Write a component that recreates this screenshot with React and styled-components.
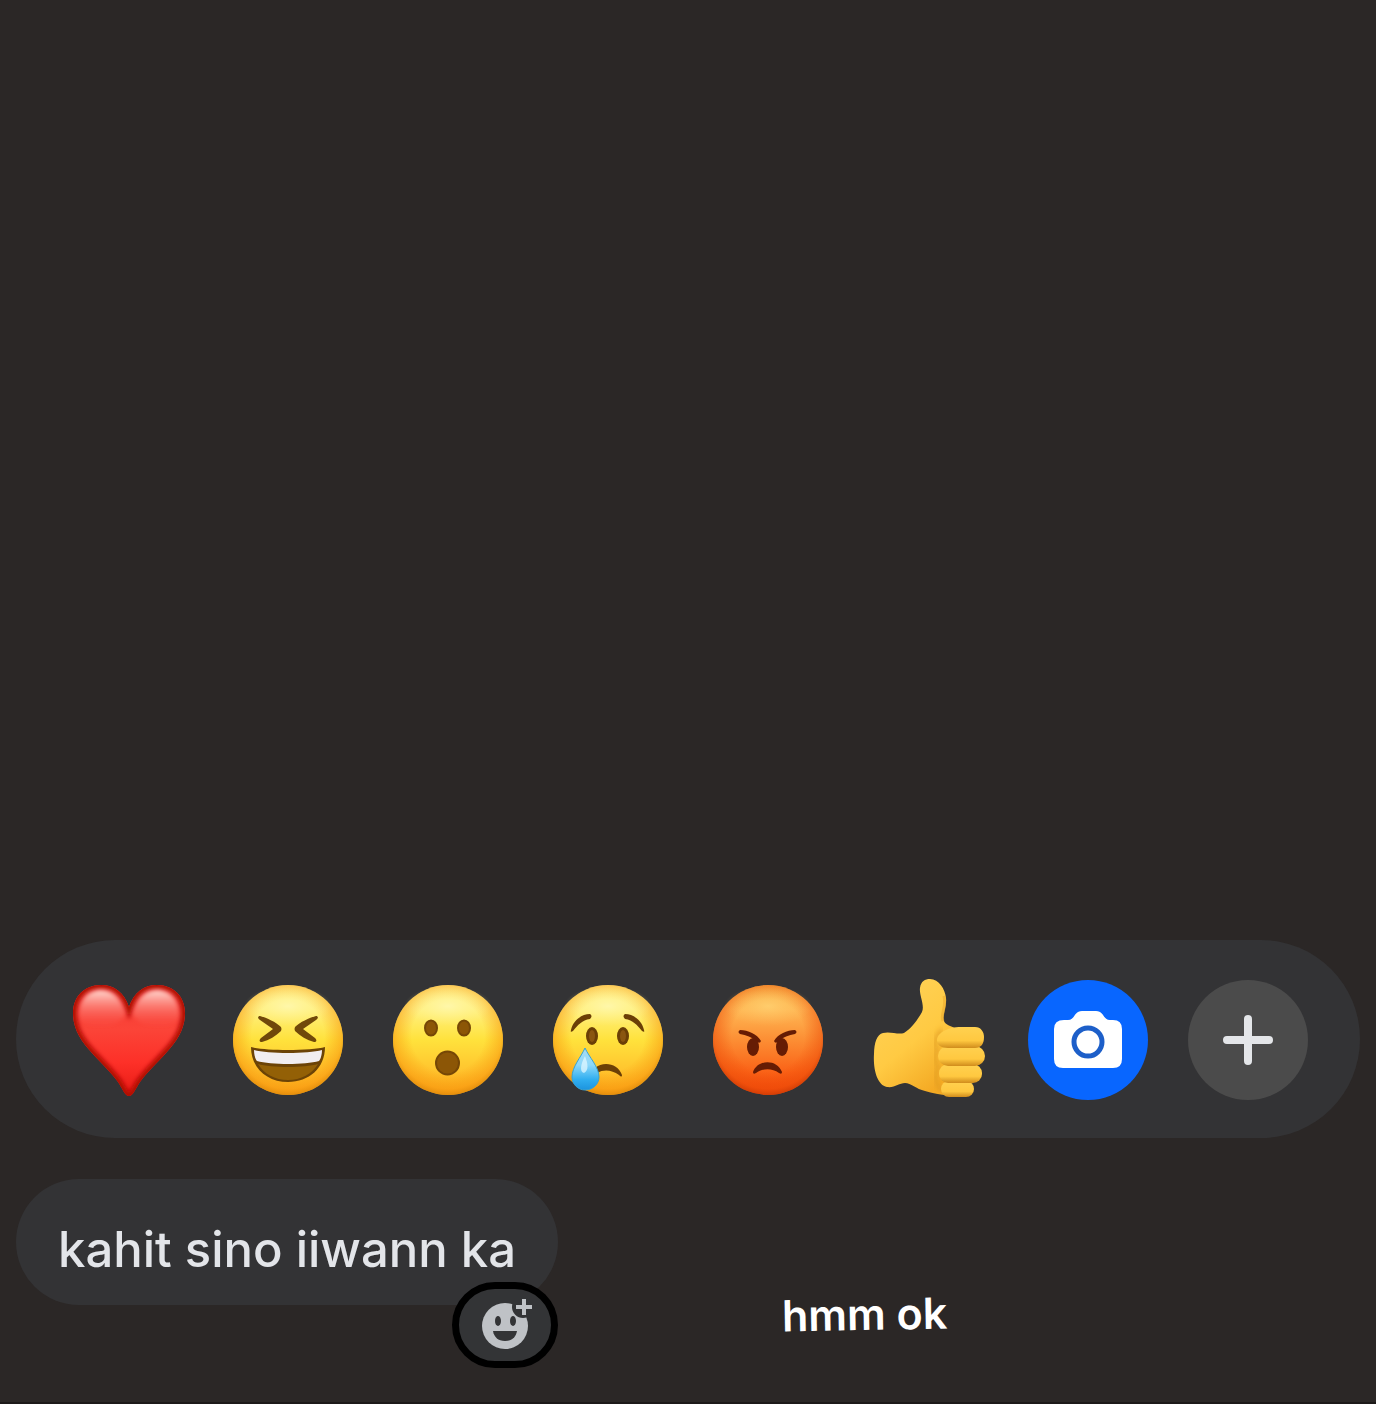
import React, { useState } from 'react';
import styled, { createGlobalStyle } from 'styled-components';

const brown = '#6b3f06';

function FaceBase({ id, angry }) {
  return (
    <>
      <defs>
        <linearGradient id={`${id}-fill`} x1='0' y1='0' x2='0' y2='1'>
          <stop offset='0' stopColor={angry ? '#f6b448' : '#fff08c'} />
          <stop offset='0.22' stopColor={angry ? '#ffb854' : '#fff080'} />
          <stop offset='0.5' stopColor={angry ? '#fc8e34' : '#ffe23c'} />
          <stop offset='0.78' stopColor={angry ? '#fa6418' : '#ffc42e'} />
          <stop offset='1' stopColor={angry ? '#f04408' : '#fba81a'} />
        </linearGradient>
        <radialGradient id={`${id}-edge`} cx='0.5' cy='0.46' r='0.55'>
          <stop offset='0.6' stopColor={angry ? '#f04804' : '#fa9408'} stopOpacity='0' />
          <stop offset='0.88' stopColor={angry ? '#ec4c08' : '#f8940c'} stopOpacity='0.5' />
          <stop offset='1' stopColor={angry ? '#c43804' : '#d88408'} stopOpacity='0.85' />
        </radialGradient>
        <radialGradient id={`${id}-shine`}>
          <stop offset='0' stopColor={angry ? '#ffd070' : '#fff8b0'} stopOpacity='0.85' />
          <stop offset='1' stopColor={angry ? '#ffc060' : '#fff490'} stopOpacity='0' />
        </radialGradient>
      </defs>
      <circle cx='60' cy='60' r='55' fill={`url(#${id}-fill)`} />
      <circle cx='60' cy='60' r='55' fill={`url(#${id}-edge)`} />
      <ellipse cx='60' cy='26' rx='44' ry='20' fill={`url(#${id}-shine)`} />
    </>
  );
}

function Heart() {
  const shape =
    'M61 27C56 12 46 5 33 5C16 5 5 17 5 33C5 49 13 61 24 73C33 83 42 91 50 102C54 108 57 116 61 116C65 116 68 108 72 102C80 91 89 83 98 73C109 61 117 49 117 33C117 17 106 5 89 5C76 5 66 12 61 27Z';
  return (
    <Icon viewBox='0 0 120 120' aria-hidden='true'>
      <defs>
        <linearGradient id='heart-fill' x1='0' y1='0' x2='0' y2='1'>
          <stop offset='0' stopColor='#f23a34' />
          <stop offset='0.4' stopColor='#fb4438' />
          <stop offset='0.7' stopColor='#fd3028' />
          <stop offset='1' stopColor='#e81a14' />
        </linearGradient>
        <linearGradient id='heart-shine' x1='0' y1='0' x2='0' y2='1'>
          <stop offset='0' stopColor='#ffdcd4' />
          <stop offset='1' stopColor='#ff6458' stopOpacity='0' />
        </linearGradient>
        <clipPath id='heart-clip'><path d={shape} /></clipPath>
        <filter id='heart-soft'><feGaussianBlur stdDeviation='2' /></filter>
      </defs>
      <path d={shape} fill='url(#heart-fill)' />
      <g clipPath='url(#heart-clip)'>
        <path d={shape} fill='none' stroke='#b00806' strokeWidth='8' filter='url(#heart-soft)' />
        <g filter='url(#heart-soft)'>
          <path d='M11 38C10 20 20 10 33 10C46 10 53 19 58 34C47 50 21 52 11 38Z' fill='url(#heart-shine)' />
          <path d='M111 38C112 20 102 10 89 10C76 10 69 19 64 34C75 50 101 52 111 38Z' fill='url(#heart-shine)' />
        </g>
      </g>
    </Icon>
  );
}

function Laugh() {
  return (
    <Icon viewBox='0 0 120 120' aria-hidden='true'>
      <FaceBase id='laugh' />
      <g fill='#70480a'>
        <path d='M32 36C39 38 48 42 53 47Q54 49 53 51C48 56 41 60 34 62C31 62 31 60 33 58L45 49L32 40C29 38 30 36 32 36Z' />
        <path d='M88 36C81 38 72 42 67 47Q66 49 67 51C72 56 79 60 86 62C89 62 89 60 87 58L75 49L88 40C91 38 90 36 88 36Z' />
      </g>
      <path d='M23 67C35 71 84 71 97 67C97 88 81 102 60 102C39 102 23 88 23 67Z' fill='#6c4306' />
      <path d='M30 84C43 88 77 88 90 84C84 94 73 100 60 100C47 100 36 94 30 84Z' fill='#936006' />
      <path d='M26 70C40 74 80 74 94 70C94 76 92 80 91 81C77 85 43 85 29 81C28 80 26 76 26 70Z' fill='#f1edf0' />
    </Icon>
  );
}

function Wow() {
  return (
    <Icon viewBox='0 0 120 120' aria-hidden='true'>
      <FaceBase id='wow' />
      <g fill='#8c5606' stroke='#764706' strokeWidth='2'>
        <ellipse cx='43' cy='48' rx='6' ry='7.5' />
        <ellipse cx='76' cy='48' rx='6' ry='7.5' />
        <circle cx='59.5' cy='83' r='11.5' />
      </g>
    </Icon>
  );
}

function Sad() {
  return (
    <Icon viewBox='0 0 120 120' aria-hidden='true'>
      <FaceBase id='sad' />
      <defs>
        <linearGradient id='tear' x1='0' y1='0' x2='0' y2='1'>
          <stop offset='0' stopColor='#a8dcf4' />
          <stop offset='0.4' stopColor='#8cd8fa' />
          <stop offset='0.75' stopColor='#30aef0' />
          <stop offset='1' stopColor='#1c94de' />
        </linearGradient>
      </defs>
      <g fill={brown}>
        <path d='M23 50C25 41 33 34 42 34Q45 36 42 39C34 40 30 45 25 51Q22 53 23 50Z' />
        <path d='M96 50C94 41 86 34 77 34Q74 36 77 39C85 40 89 45 94 51Q97 53 96 50Z' />
        <ellipse cx='44' cy='56' rx='6' ry='9' />
        <ellipse cx='75' cy='56' rx='6' ry='9' />
        <path d='M47 88C55 81 70 83 74 95Q74 98 71 95C64 90 56 89 49 93Z' />
      </g>
      <g fill='#8a5610'>
        <ellipse cx='44' cy='56' rx='3' ry='6' />
        <ellipse cx='75' cy='56' rx='3' ry='6' />
      </g>
      <path d='M37 68C41 77 51 87 51 97C51 104 45 110 37 110C30 110 24 104 24 97C24 87 33 77 37 68Z' fill='url(#tear)' stroke='#35a2d4' strokeWidth='1' />
      <path d='M37 76C40 84 41 90 36 93C31 92 33 83 37 76Z' fill='#e0f7ff' opacity='0.75' />
    </Icon>
  );
}

function Angry() {
  return (
    <Icon viewBox='0 0 120 120' aria-hidden='true'>
      <FaceBase id='angry' angry />
      <g fill='#661c04'>
        <path d='M32 50C40 50 49 54 53 61Q52 64 49 62C44 57 38 55 32 54Q29 52 32 50Z' />
        <path d='M87 50C79 50 70 54 66 61Q67 64 70 62C75 57 81 55 87 54Q90 52 87 50Z' />
        <ellipse cx='45' cy='67' rx='6' ry='9' />
        <ellipse cx='74' cy='67' rx='6' ry='9' />
        <path d='M45 92C50 79 69 79 74 92Q74 95 71 93C64 88 55 88 48 93Q45 95 45 92Z' />
      </g>
    </Icon>
  );
}

function Thumb() {
  return (
    <Icon viewBox='0 0 120 120' aria-hidden='true'>
      <defs>
        <linearGradient id='thumb-fill' x1='0' y1='0' x2='0.6' y2='1'>
          <stop offset='0' stopColor='#ffd45c' />
          <stop offset='0.6' stopColor='#ffca43' />
          <stop offset='1' stopColor='#f4aa24' />
        </linearGradient>
        <linearGradient id='finger' x1='0' y1='0' x2='0' y2='1'>
          <stop offset='0' stopColor='#ffd150' />
          <stop offset='0.65' stopColor='#ffc840' />
          <stop offset='1' stopColor='#d08c1c' />
        </linearGradient>
        <filter id='thumb-soft'><feGaussianBlur stdDeviation='2' /></filter>
      </defs>
      <path
        d='M15 53C22 51 30 55 36 53C44 48 50 39 54 32C57 25 51 15 52 8C53 1 57 -1 62 -1C71 -1 77 9 78 18C79 27 74 35 76 41C77 45 84 46 88 49L92 112C84 118 68 114 57 111C48 109 43 103 37 103C31 103 27 108 19 107C9 105 5 89 6 74C6 63 9 54 15 53Z'
        fill='url(#thumb-fill)'
      />
      <path d='M74 50C66 58 66 66 69 70C65 78 68 84 70 87C65 98 70 108 74 112' fill='none' stroke='#dc9822' strokeWidth='4' opacity='0.6' filter='url(#thumb-soft)' />
      <path d='M76 16C79 28 72 34 75 41' fill='none' stroke='#e9a529' strokeWidth='3' opacity='0.5' />
      <g fill='url(#finger)'>
        <rect x='73' y='101' width='33' height='16' rx='8' />
        <rect x='71' y='84' width='43' height='19' rx='9' />
        <rect x='70' y='66' width='47' height='20' rx='10' />
        <path d='M78 50C84 46 96 47 107 47C113 47 116 52 116 57C116 64 113 68 107 68H80C73 68 69 65 69 60C69 56 73 52 78 50Z' />
      </g>
    </Icon>
  );
}

function Camera() {
  return (
    <Icon viewBox='0 0 120 120' aria-hidden='true'>
      <path
        d='M36 40H40C47 40 46 31 54 31H68C76 31 75 40 82 40H85Q94 40 94 49V79Q94 88 85 88H35Q26 88 26 79V49Q26 40 36 40Z'
        fill='#fff'
      />
      <circle cx='60' cy='62' r='14' fill='#fff' stroke='#1d5fc9' strokeWidth='5' />
    </Icon>
  );
}

function Plus() {
  return (
    <Icon viewBox='0 0 120 120' aria-hidden='true'>
      <path d='M60 39V81M39 60H81' stroke='#e4e6e9' strokeWidth='8' strokeLinecap='round' />
    </Icon>
  );
}

function AddReaction() {
  return (
    <SmallIcon viewBox='0 0 60 60' aria-hidden='true'>
      <defs>
        <mask id='corner'>
          <rect width='60' height='60' fill='#fff' />
          <circle cx='48' cy='12' r='11' fill='#000' />
        </mask>
      </defs>
      <circle cx='30' cy='31' r='23' fill='#bfc2c6' mask='url(#corner)' />
      <path d='M49 4V20M41 12H57' stroke='#bfc2c6' strokeWidth='4' />
      <g fill='#333436'>
        <ellipse cx='23' cy='26' rx='3' ry='5' />
        <ellipse cx='38' cy='26' rx='3' ry='5' />
        <path d='M18 36H42C41 42 37 46 30 46C23 46 19 42 18 36Z' />
      </g>
    </SmallIcon>
  );
}

const reactions = [
  { label: 'Love', icon: Heart },
  { label: 'Haha', icon: Laugh },
  { label: 'Wow', icon: Wow },
  { label: 'Sad', icon: Sad },
  { label: 'Angry', icon: Angry },
  { label: 'Like', icon: Thumb },
  { label: 'Camera', icon: Camera, color: '#0866ff' },
  { label: 'More reactions', icon: Plus, color: '#4b4b4b' },
];

export default function App() {
  const [selected, setSelected] = useState(null);

  return (
    <>
      <GlobalStyle />
      <Chat>
        <ReactionBar>
          {reactions.map(({ label, icon: ReactionIcon, color }) => (
            <ReactionButton
              key={label}
              type='button'
              aria-label={label}
              aria-pressed={selected === label}
              $color={color}
              onClick={() => setSelected(label)}
            >
              <ReactionIcon />
            </ReactionButton>
          ))}
        </ReactionBar>
        <MessageRow>
          <Bubble>
            kahit sino iiwann ka
            <ReactBadge type='button' aria-label='Add reaction'>
              <AddReaction />
            </ReactBadge>
          </Bubble>
          <Caption>hmm ok</Caption>
        </MessageRow>
      </Chat>
    </>
  );
}

const GlobalStyle = createGlobalStyle`
  * {
    box-sizing: border-box;
  }

  body {
    margin: 0;
    background: #2b2726;
    font-family: Inter, 'Liberation Sans', sans-serif;
  }
`;

const Chat = styled.main`
  min-height: 100vh;
  display: flex;
  flex-direction: column;
  justify-content: flex-end;
  gap: 41px;
  padding: 16px 16px 64px;
  border-bottom: 2px solid #1d1a19;
`;

const ReactionBar = styled.div`
  display: flex;
  align-items: center;
  justify-content: space-between;
  padding: 40px 52px 38px;
  border-radius: 99px;
  background: #333335;
`;

const ReactionButton = styled.button`
  width: 120px;
  height: 120px;
  padding: 0;
  border: 0;
  border-radius: 50%;
  background: ${({ $color }) => $color || 'transparent'};
  cursor: pointer;
`;

const Icon = styled.svg`
  display: block;
  width: 100%;
  height: 100%;
  overflow: visible;
`;

const SmallIcon = styled.svg`
  display: block;
  width: 60px;
  height: 60px;
`;

const MessageRow = styled.div`
  display: flex;
  align-items: flex-end;
  gap: 224px;
`;

const Bubble = styled.div`
  position: relative;
  margin-bottom: 33px;
  padding: 41px 42px 25px;
  border-radius: 63px;
  background: #333335;
  color: #e3e5e9;
  font-size: 49px;
  font-weight: 500;
  line-height: 60px;
  white-space: nowrap;
`;

const ReactBadge = styled.button`
  position: absolute;
  right: 0;
  bottom: -63px;
  width: 106px;
  height: 86px;
  display: flex;
  align-items: center;
  justify-content: center;
  padding: 0;
  border: 7px solid #000;
  border-radius: 43px;
  background: #333436;
  cursor: pointer;
`;

const Caption = styled.p`
  margin: 0;
  color: #fff;
  font-size: 43px;
  font-weight: 600;
  line-height: 48px;
  white-space: nowrap;
  transform: rotate(-1deg);
`;
